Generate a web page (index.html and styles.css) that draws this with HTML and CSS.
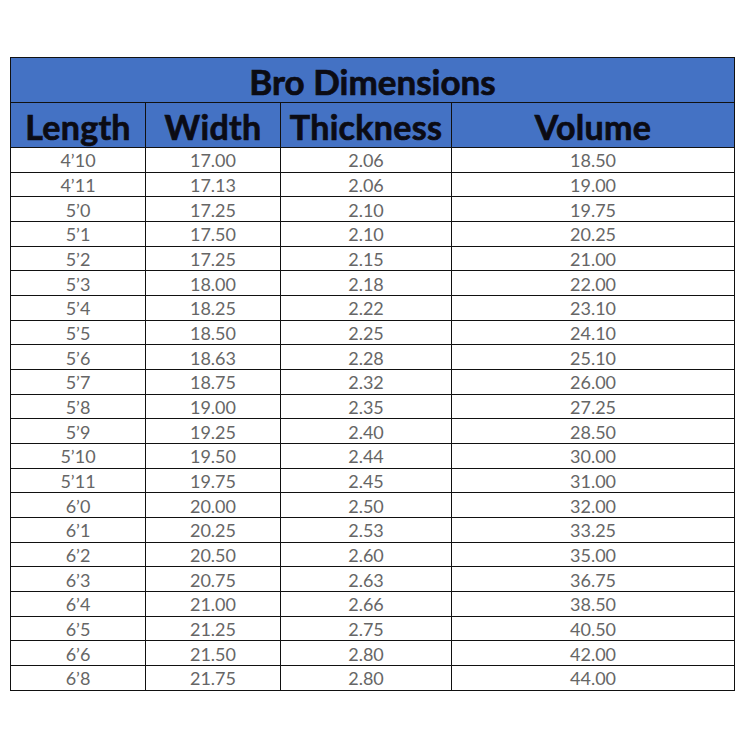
FILE: index.html
```html
<!DOCTYPE html>
<html>
<head>
<meta charset="utf-8">
<link rel="stylesheet" href="styles.css">
</head>
<body>
<div class="page">
<table class="dims">
<colgroup>
<col class="c1"><col class="c2"><col class="c3"><col class="c4">
</colgroup>
<thead>
<tr class="title-row"><th colspan="4">Bro Dimensions</th></tr>
<tr class="head-row"><th>Length</th><th>Width</th><th>Thickness</th><th>Volume</th></tr>
</thead>
<tbody>
<tr><td>4’10</td><td>17.00</td><td>2.06</td><td>18.50</td></tr>
<tr><td>4’11</td><td>17.13</td><td>2.06</td><td>19.00</td></tr>
<tr><td>5’0</td><td>17.25</td><td>2.10</td><td>19.75</td></tr>
<tr><td>5’1</td><td>17.50</td><td>2.10</td><td>20.25</td></tr>
<tr><td>5’2</td><td>17.25</td><td>2.15</td><td>21.00</td></tr>
<tr><td>5’3</td><td>18.00</td><td>2.18</td><td>22.00</td></tr>
<tr><td>5’4</td><td>18.25</td><td>2.22</td><td>23.10</td></tr>
<tr><td>5’5</td><td>18.50</td><td>2.25</td><td>24.10</td></tr>
<tr><td>5’6</td><td>18.63</td><td>2.28</td><td>25.10</td></tr>
<tr><td>5’7</td><td>18.75</td><td>2.32</td><td>26.00</td></tr>
<tr><td>5’8</td><td>19.00</td><td>2.35</td><td>27.25</td></tr>
<tr><td>5’9</td><td>19.25</td><td>2.40</td><td>28.50</td></tr>
<tr><td>5’10</td><td>19.50</td><td>2.44</td><td>30.00</td></tr>
<tr><td>5’11</td><td>19.75</td><td>2.45</td><td>31.00</td></tr>
<tr><td>6’0</td><td>20.00</td><td>2.50</td><td>32.00</td></tr>
<tr><td>6’1</td><td>20.25</td><td>2.53</td><td>33.25</td></tr>
<tr><td>6’2</td><td>20.50</td><td>2.60</td><td>35.00</td></tr>
<tr><td>6’3</td><td>20.75</td><td>2.63</td><td>36.75</td></tr>
<tr><td>6’4</td><td>21.00</td><td>2.66</td><td>38.50</td></tr>
<tr><td>6’5</td><td>21.25</td><td>2.75</td><td>40.50</td></tr>
<tr><td>6’6</td><td>21.50</td><td>2.80</td><td>42.00</td></tr>
<tr><td>6’8</td><td>21.75</td><td>2.80</td><td>44.00</td></tr>
</tbody>
</table>
</div>
</body>
</html>
```
FILE: styles.css
```css
html, body {
  margin: 0;
  padding: 0;
  background: #ffffff;
}
.page {
  padding: 57px 0 0 10px;
}
.dims {
  border-collapse: collapse;
  table-layout: fixed;
  width: 724px;
  font-family: Lato, "Liberation Sans", sans-serif;
}
.c1 { width: 135px; }
.c2 { width: 135px; }
.c3 { width: 171px; }
.c4 { width: 283px; }
.dims th, .dims td {
  border: 1px solid #111111;
  padding: 0;
  text-align: center;
  white-space: nowrap;
  overflow: hidden;
}
.dims th {
  background: #4472c4;
  color: #0b0b14;
  font-weight: 700;
  line-height: 1;
  -webkit-text-stroke: 0.7px #0b0b14;
}
.title-row th {
  height: 42px;
  padding-top: 2px;
  font-size: 35px;
}
.head-row th {
  height: 40px;
  padding-top: 4px;
  font-size: 34px;
  letter-spacing: 0.3px;
}
.dims td {
  height: 22.68px;
  color: #666666;
  font-size: 18px;
  line-height: 1;
  padding-top: 1px;
}
```
